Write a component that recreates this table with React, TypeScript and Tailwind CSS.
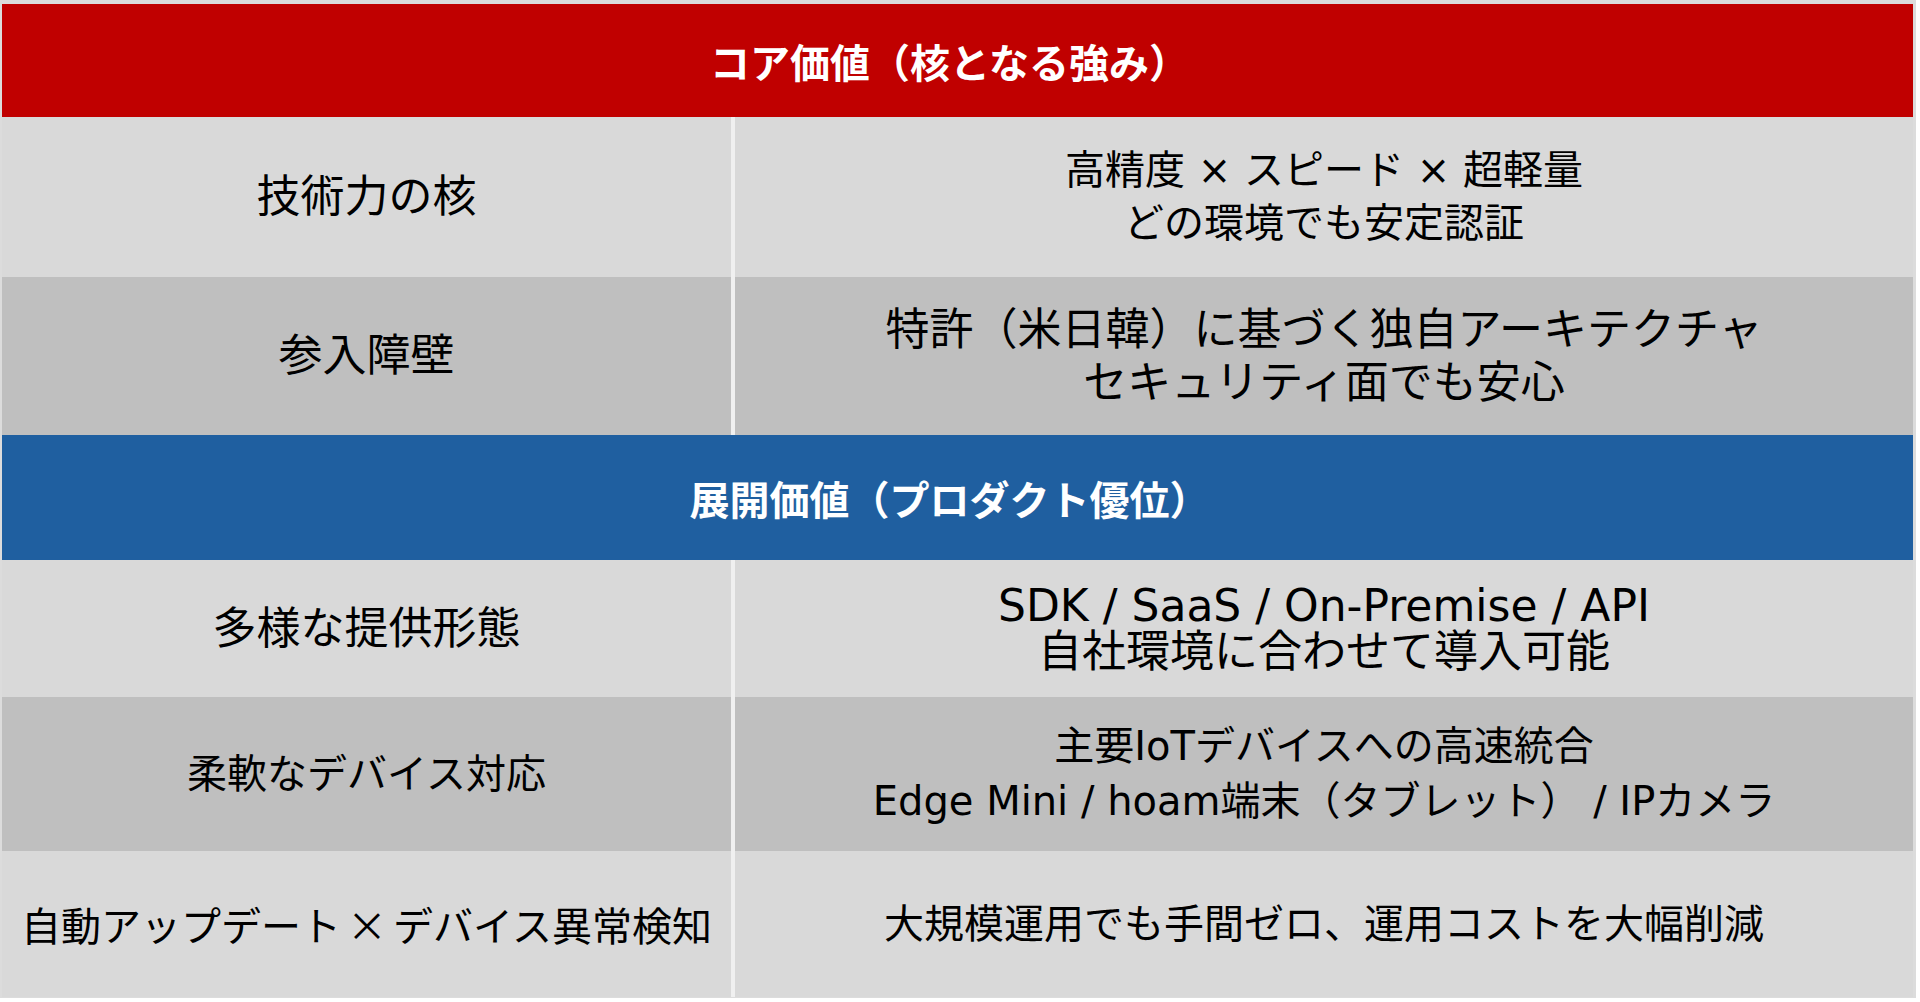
import React from "react";

const font = { fontFamily: '"DejaVu Sans", "Noto Sans CJK JP", sans-serif' };
const cjk = { fontFamily: '"Noto Sans CJK JP", sans-serif' };

function Header({ title, color, h }: { title: string; color: string; h: string }) {
  return (
    <div className={`${color} ${h} flex items-center justify-center text-white font-bold text-[40px] leading-none`}>
      <span className="pr-[16px]" style={cjk}>{title}</span>
    </div>
  );
}

function Row({
  left,
  right,
  bg,
  h,
  lh,
  ls,
  rs,
  leftCjk,
}: {
  left: React.ReactNode;
  right: string[];
  bg: string;
  h: string;
  lh: string;
  ls: string;
  rs: string;
  leftCjk?: boolean;
}) {
  return (
    <div className={`flex ${h}`}>
      <div
        className={`${bg} w-[729px] flex items-center justify-center ${ls} text-black leading-none whitespace-pre`}
        style={leftCjk ? cjk : undefined}
      >
        {left}
      </div>
      <div className="w-[4px] bg-[#f0f0f0]" />
      <div className={`${bg} flex-1 flex flex-col items-center justify-center ${rs} text-black ${lh}`}>
        {right.map((r, i) => (
          <div key={i} className="whitespace-pre">{r}</div>
        ))}
      </div>
    </div>
  );
}

export default function App() {
  return (
    <div className="w-[1920px] h-[1002px] bg-white overflow-hidden" style={font}>
      <div className="w-[1916px] bg-[#dcdcdc] pt-[4px] pl-[2px] pr-[3px] pb-[1px]">
        <div className="flex flex-col w-[1911px]">
          <Header title="コア価値（核となる強み）" color="bg-[#c00000]" h="h-[113px]" />
          <Row
            left="技術力の核"
            right={["高精度 × スピード × 超軽量", "どの環境でも安定認証"]}
            bg="bg-[#d9d9d9]"
            h="h-[160px]"
            lh="leading-[53px]"
            ls="text-[44px]"
            rs="text-[40px]"
          />
          <Row
            left="参入障壁"
            right={["特許（米日韓）に基づく独自アーキテクチャ", "セキュリティ面でも安心"]}
            bg="bg-[#bfbfbf]"
            h="h-[158px]"
            lh="leading-[53px]"
            ls="text-[44px]"
            rs="text-[44px]"
          />
          <Header title="展開価値（プロダクト優位）" color="bg-[#1f5fa0]" h="h-[125px]" />
          <Row
            left="多様な提供形態"
            right={["SDK / SaaS / On-Premise / API", "自社環境に合わせて導入可能"]}
            bg="bg-[#d9d9d9]"
            h="h-[137px]"
            lh="leading-[46px]"
            ls="text-[44px]"
            rs="text-[44px]"
          />
          <Row
            left="柔軟なデバイス対応"
            right={["主要IoTデバイスへの高速統合", "Edge Mini / hoam端末（タブレット） / IPカメラ"]}
            bg="bg-[#bfbfbf]"
            h="h-[154px]"
            lh="leading-[55px]"
            ls="text-[40px]"
            rs="text-[40px]"
          />
          <Row
            left={
              <>
                自動アップデート<span className="mx-[6px]">×</span>デバイス異常検知
              </>
            }
            right={["大規模運用でも手間ゼロ、運用コストを大幅削減"]}
            bg="bg-[#d9d9d9]"
            h="h-[146px]"
            lh="leading-none"
            ls="text-[40px]"
            rs="text-[40px]"
            leftCjk
          />
        </div>
      </div>
    </div>
  );
}
